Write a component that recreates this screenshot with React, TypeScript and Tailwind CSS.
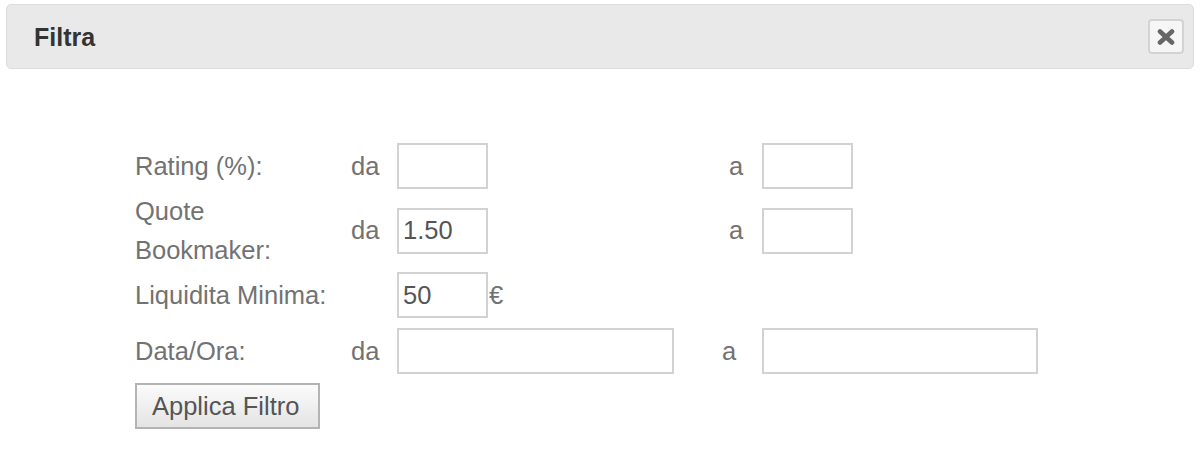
import React from "react";

const font = { fontFamily: '"Liberation Sans", Arial, Helvetica, sans-serif' };

function Box({ w, value }: { w: string; value?: string }) {
  return (
    <div
      className={`${w} h-[46px] border-2 border-[#d2d2d2] bg-white flex items-center pl-[4px] text-[#555555]`}
    >
      {value}
    </div>
  );
}

export default function App() {
  return (
    <div
      className="w-[1200px] h-[457px] bg-white overflow-hidden flex flex-col text-[25.5px] leading-[37px]"
      style={font}
    >
      <div className="mt-[4px] mx-[6px] h-[65px] rounded-[5px] border border-[#dcdcdc] bg-[#e9e9e9] flex items-center justify-between pl-[27px] pr-[9px]">
        <span className="font-bold text-[25px] text-[#333333] pt-[2px]">Filtra</span>
        <div className="w-[36px] h-[35px] rounded-[4px] border-2 border-[#d3d3d3] bg-[#f6f6f6] flex items-center justify-center">
          <svg width="18" height="16" viewBox="0 0 18 16">
            <path
              d="M3 2.5 L15 13.5 M15 2.5 L3 13.5"
              stroke="#666666"
              strokeWidth="4.6"
              strokeLinecap="round"
            />
          </svg>
        </div>
      </div>

      <div className="mt-[69px] pl-[135px] flex flex-col text-[#727272]">
        <div className="h-[56px] flex items-center">
          <div className="w-[216px]">Rating (%):</div>
          <div className="w-[46px]">da</div>
          <div className="w-[332px]">
            <Box w="w-[91px]" />
          </div>
          <div className="w-[33px]">a</div>
          <Box w="w-[91px]" />
        </div>

        <div className="h-[73px] flex items-center">
          <div className="w-[216px] leading-[39px]">
            Quote
            <br />
            Bookmaker:
          </div>
          <div className="w-[46px]">da</div>
          <div className="w-[332px]">
            <Box w="w-[91px]" value="1.50" />
          </div>
          <div className="w-[33px]">a</div>
          <Box w="w-[91px]" />
        </div>

        <div className="h-[56px] flex items-center">
          <div className="w-[216px]">Liquidita Minima:</div>
          <div className="w-[46px]"></div>
          <Box w="w-[91px]" value="50" />
          <span className="ml-[1px]">€</span>
        </div>

        <div className="h-[56px] flex items-center">
          <div className="w-[216px]">Data/Ora:</div>
          <div className="w-[46px]">da</div>
          <div className="w-[325px]">
            <Box w="w-[277px]" />
          </div>
          <div className="w-[40px]">a</div>
          <Box w="w-[276px]" />
        </div>

        <div className="mt-[4px]">
          <button className="w-[185px] h-[46px] border-2 border-[#b4b4b4] bg-gradient-to-b from-[#fbfbfb] to-[#e4e4e4] text-[#555555] text-left pl-[15px]">
            Applica Filtro
          </button>
        </div>
      </div>
    </div>
  );
}
